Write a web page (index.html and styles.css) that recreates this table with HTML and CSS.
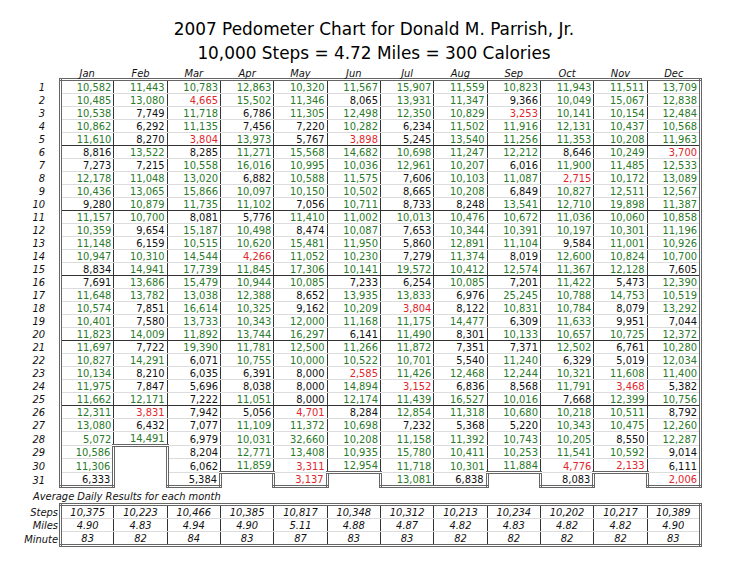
FILE: index.html
```html
<!DOCTYPE html>
<html>
<head>
<meta charset="utf-8">
<title>2007 Pedometer Chart</title>
<link rel="stylesheet" href="styles.css">
</head>
<body>
<div class="title">
<p>2007 Pedometer Chart for Donald M. Parrish, Jr.</p>
<p>10,000 Steps = 4.72 Miles = 300 Calories</p>
</div>
<table class="chart">
<colgroup><col class="lab"><col class="mon"><col class="mon"><col class="mon"><col class="mon"><col class="mon"><col class="mon"><col class="mon"><col class="mon"><col class="mon"><col class="mon"><col class="mon"><col class="mon"></colgroup>
<thead>
<tr><th></th><th class="m">Jan</th><th class="m">Feb</th><th class="m">Mar</th><th class="m">Apr</th><th class="m">May</th><th class="m">Jun</th><th class="m">Jul</th><th class="m">Aug</th><th class="m">Sep</th><th class="m">Oct</th><th class="m">Nov</th><th class="m">Dec</th></tr>
</thead>
<tbody>
<tr><th>1</th><td class="g">10,582</td><td class="g">11,443</td><td class="g">10,783</td><td class="g">12,863</td><td class="g">10,320</td><td class="g">11,567</td><td class="g">15,907</td><td class="g">11,559</td><td class="g">10,823</td><td class="g">11,943</td><td class="g">11,511</td><td class="g">13,709</td></tr>
<tr><th>2</th><td class="g">10,485</td><td class="g">13,080</td><td class="r">4,665</td><td class="g">15,502</td><td class="g">11,346</td><td>8,065</td><td class="g">13,931</td><td class="g">11,347</td><td>9,366</td><td class="g">10,049</td><td class="g">15,067</td><td class="g">12,838</td></tr>
<tr><th>3</th><td class="g">10,538</td><td>7,749</td><td class="g">11,718</td><td>6,786</td><td class="g">11,305</td><td class="g">12,498</td><td class="g">12,350</td><td class="g">10,829</td><td class="r">3,253</td><td class="g">10,141</td><td class="g">10,154</td><td class="g">12,484</td></tr>
<tr><th>4</th><td class="g">10,862</td><td>6,292</td><td class="g">11,135</td><td>7,456</td><td>7,220</td><td class="g">10,282</td><td>6,234</td><td class="g">11,502</td><td class="g">11,916</td><td class="g">12,131</td><td class="g">10,437</td><td class="g">10,568</td></tr>
<tr class="sep"><th>5</th><td class="g">11,610</td><td>8,270</td><td class="r">3,804</td><td class="g">13,973</td><td>5,767</td><td class="r">3,898</td><td>5,245</td><td class="g">13,540</td><td class="g">11,256</td><td class="g">11,353</td><td class="g">10,208</td><td class="g">11,963</td></tr>
<tr><th>6</th><td>8,816</td><td class="g">13,522</td><td>8,285</td><td class="g">11,271</td><td class="g">15,568</td><td class="g">14,682</td><td class="g">10,698</td><td class="g">11,247</td><td class="g">12,212</td><td>8,646</td><td class="g">10,249</td><td class="r">3,700</td></tr>
<tr><th>7</th><td>7,273</td><td>7,215</td><td class="g">10,558</td><td class="g">16,016</td><td class="g">10,995</td><td class="g">10,036</td><td class="g">12,961</td><td class="g">10,207</td><td>6,016</td><td class="g">11,900</td><td class="g">11,485</td><td class="g">12,533</td></tr>
<tr><th>8</th><td class="g">12,178</td><td class="g">11,048</td><td class="g">13,020</td><td>6,882</td><td class="g">10,588</td><td class="g">11,575</td><td>7,606</td><td class="g">10,103</td><td class="g">11,087</td><td class="r">2,715</td><td class="g">10,172</td><td class="g">13,089</td></tr>
<tr><th>9</th><td class="g">10,436</td><td class="g">13,065</td><td class="g">15,866</td><td class="g">10,097</td><td class="g">10,150</td><td class="g">10,502</td><td>8,665</td><td class="g">10,208</td><td>6,849</td><td class="g">10,827</td><td class="g">12,511</td><td class="g">12,567</td></tr>
<tr class="sep"><th>10</th><td>9,280</td><td class="g">10,879</td><td class="g">11,735</td><td class="g">11,102</td><td>7,056</td><td class="g">10,711</td><td>8,733</td><td>8,248</td><td class="g">13,541</td><td class="g">12,710</td><td class="g">19,898</td><td class="g">11,387</td></tr>
<tr><th>11</th><td class="g">11,157</td><td class="g">10,700</td><td>8,081</td><td>5,776</td><td class="g">11,410</td><td class="g">11,002</td><td class="g">10,013</td><td class="g">10,476</td><td class="g">10,672</td><td class="g">11,036</td><td class="g">10,060</td><td class="g">10,858</td></tr>
<tr><th>12</th><td class="g">10,359</td><td>9,654</td><td class="g">15,187</td><td class="g">10,498</td><td>8,474</td><td class="g">10,087</td><td>7,653</td><td class="g">10,344</td><td class="g">10,391</td><td class="g">10,197</td><td class="g">10,301</td><td class="g">11,196</td></tr>
<tr><th>13</th><td class="g">11,148</td><td>6,159</td><td class="g">10,515</td><td class="g">10,620</td><td class="g">15,481</td><td class="g">11,950</td><td>5,860</td><td class="g">12,891</td><td class="g">11,104</td><td>9,584</td><td class="g">11,001</td><td class="g">10,926</td></tr>
<tr><th>14</th><td class="g">10,947</td><td class="g">10,310</td><td class="g">14,544</td><td class="r">4,266</td><td class="g">11,052</td><td class="g">10,230</td><td>7,279</td><td class="g">11,374</td><td>8,019</td><td class="g">12,600</td><td class="g">10,824</td><td class="g">10,700</td></tr>
<tr class="sep"><th>15</th><td>8,834</td><td class="g">14,941</td><td class="g">17,739</td><td class="g">11,845</td><td class="g">17,306</td><td class="g">10,141</td><td class="g">19,572</td><td class="g">10,412</td><td class="g">12,574</td><td class="g">11,367</td><td class="g">12,128</td><td>7,605</td></tr>
<tr><th>16</th><td>7,691</td><td class="g">13,686</td><td class="g">15,479</td><td class="g">10,944</td><td class="g">10,085</td><td>7,233</td><td>6,254</td><td class="g">10,085</td><td>7,201</td><td class="g">11,422</td><td>5,473</td><td class="g">12,390</td></tr>
<tr><th>17</th><td class="g">11,648</td><td class="g">13,782</td><td class="g">13,038</td><td class="g">12,388</td><td>8,652</td><td class="g">13,935</td><td class="g">13,833</td><td>6,976</td><td class="g">25,245</td><td class="g">10,788</td><td class="g">14,753</td><td class="g">10,519</td></tr>
<tr><th>18</th><td class="g">10,574</td><td>7,851</td><td class="g">16,614</td><td class="g">10,325</td><td>9,162</td><td class="g">10,209</td><td class="r">3,804</td><td>8,122</td><td class="g">10,831</td><td class="g">10,784</td><td>8,079</td><td class="g">13,292</td></tr>
<tr><th>19</th><td class="g">10,401</td><td>7,580</td><td class="g">13,733</td><td class="g">10,343</td><td class="g">12,000</td><td class="g">11,168</td><td class="g">11,175</td><td class="g">14,477</td><td>6,309</td><td class="g">11,633</td><td>9,951</td><td>7,044</td></tr>
<tr class="sep"><th>20</th><td class="g">11,823</td><td class="g">14,009</td><td class="g">11,892</td><td class="g">13,744</td><td class="g">16,297</td><td>6,141</td><td class="g">11,490</td><td>8,301</td><td class="g">10,133</td><td class="g">10,657</td><td class="g">10,725</td><td class="g">12,372</td></tr>
<tr><th>21</th><td class="g">11,697</td><td>7,722</td><td class="g">19,390</td><td class="g">11,781</td><td class="g">12,500</td><td class="g">11,266</td><td class="g">11,872</td><td>7,351</td><td>7,371</td><td class="g">12,502</td><td>6,761</td><td class="g">10,280</td></tr>
<tr><th>22</th><td class="g">10,827</td><td class="g">14,291</td><td>6,071</td><td class="g">10,755</td><td class="g">10,000</td><td class="g">10,522</td><td class="g">10,701</td><td>5,540</td><td class="g">11,240</td><td>6,329</td><td>5,019</td><td class="g">12,034</td></tr>
<tr><th>23</th><td class="g">10,134</td><td>8,210</td><td>6,035</td><td>6,391</td><td>8,000</td><td class="r">2,585</td><td class="g">11,426</td><td class="g">12,468</td><td class="g">12,244</td><td class="g">10,321</td><td class="g">11,608</td><td class="g">11,400</td></tr>
<tr><th>24</th><td class="g">11,975</td><td>7,847</td><td>5,696</td><td>8,038</td><td>8,000</td><td class="g">14,894</td><td class="r">3,152</td><td>6,836</td><td>8,568</td><td class="g">11,791</td><td class="r">3,468</td><td>5,382</td></tr>
<tr class="sep"><th>25</th><td class="g">11,662</td><td class="g">12,171</td><td>7,222</td><td class="g">11,051</td><td>8,000</td><td class="g">12,174</td><td class="g">11,439</td><td class="g">16,527</td><td class="g">10,016</td><td>7,668</td><td class="g">12,399</td><td class="g">10,756</td></tr>
<tr><th>26</th><td class="g">12,311</td><td class="r">3,831</td><td>7,942</td><td>5,056</td><td class="r">4,701</td><td>8,284</td><td class="g">12,854</td><td class="g">11,318</td><td class="g">10,680</td><td class="g">10,218</td><td class="g">10,511</td><td>8,792</td></tr>
<tr><th>27</th><td class="g">13,080</td><td>6,432</td><td>7,077</td><td class="g">11,109</td><td class="g">11,372</td><td class="g">10,698</td><td>7,232</td><td>5,368</td><td>5,220</td><td class="g">10,343</td><td class="g">10,475</td><td class="g">12,260</td></tr>
<tr><th>28</th><td class="g">5,072</td><td class="g end">14,491</td><td>6,979</td><td class="g">10,031</td><td class="g">32,660</td><td class="g">10,208</td><td class="g">11,158</td><td class="g">11,392</td><td class="g">10,743</td><td class="g">10,205</td><td>8,550</td><td class="g">12,287</td></tr>
<tr><th>29</th><td class="g br">10,586</td><td class="x"></td><td class="bl">8,204</td><td class="g">12,771</td><td class="g">13,408</td><td class="g">10,935</td><td class="g">15,780</td><td class="g">10,411</td><td class="g">10,253</td><td class="g">11,541</td><td class="g">10,592</td><td>9,014</td></tr>
<tr><th>30</th><td class="g br">11,306</td><td class="x"></td><td class="bl">6,062</td><td class="g end">11,859</td><td class="r">3,311</td><td class="g end">12,954</td><td class="g">11,718</td><td class="g">10,301</td><td class="g end">11,884</td><td class="r">4,776</td><td class="r end">2,133</td><td>6,111</td></tr>
<tr class="last"><th>31</th><td class="br">6,333</td><td class="x"></td><td class="bl br">5,384</td><td class="x"></td><td class="r bl br">3,137</td><td class="x"></td><td class="g bl">13,081</td><td class="br">6,838</td><td class="x"></td><td class="bl br">8,083</td><td class="x"></td><td class="r bl">2,006</td></tr>
</tbody>
</table>
<div class="cap">Average Daily Results for each month</div>
<table class="avg">
<colgroup><col class="lab"><col class="mon"><col class="mon"><col class="mon"><col class="mon"><col class="mon"><col class="mon"><col class="mon"><col class="mon"><col class="mon"><col class="mon"><col class="mon"><col class="mon"></colgroup>
<tbody>
<tr><th>Steps</th><td>10,375</td><td>10,223</td><td>10,466</td><td>10,385</td><td>10,817</td><td>10,348</td><td>10,312</td><td>10,213</td><td>10,234</td><td>10,202</td><td>10,217</td><td>10,389</td></tr>
<tr><th>Miles</th><td>4.90</td><td>4.83</td><td>4.94</td><td>4.90</td><td>5.11</td><td>4.88</td><td>4.87</td><td>4.82</td><td>4.83</td><td>4.82</td><td>4.82</td><td>4.90</td></tr>
<tr><th>Minute</th><td>83</td><td>82</td><td>84</td><td>83</td><td>87</td><td>83</td><td>83</td><td>82</td><td>82</td><td>82</td><td>82</td><td>83</td></tr>
</tbody>
</table>
</body>
</html>
```

FILE: styles.css
```css
html, body {
  margin: 0;
  padding: 0;
  background: #ffffff;
}

body {
  width: 740px;
  height: 572px;
  overflow: hidden;
  font-family: "DejaVu Sans Condensed", "DejaVu Sans", sans-serif;
  font-stretch: condensed;
  font-size: 11px;
  color: #111111;
}

.title {
  padding-top: 17px;
  padding-left: 8px;
  text-align: center;
  font-family: "DejaVu Sans", sans-serif;
  font-stretch: normal;
  font-size: 16.9px;
  line-height: 24px;
  color: #000000;
}

.title p {
  margin: 0;
}

.chart,
.avg {
  border-collapse: collapse;
  table-layout: fixed;
  width: 702px;
  border: none;
}

.lab {
  width: 60.5px;
}

.mon {
  width: 53.33px;
}

.chart th,
.chart td,
.avg th,
.avg td {
  padding: 0;
  font-size: 11px;
  font-weight: normal;
  white-space: nowrap;
}

.chart thead th {
  height: 13px;
  line-height: 8px;
  vertical-align: bottom;
  font-style: italic;
  text-align: center;
  border: none;
}

.chart tbody th {
  text-align: right;
  font-style: italic;
  padding: 1px 14px 0 0;
  line-height: 11px;
  border: none;
}

.chart td {
  text-align: right;
  padding: 1px 2px 0 0;
  line-height: 11px;
  border-left: 1px solid #333333;
  border-right: 1px solid #333333;
  border-bottom: 1px solid #dcdcdc;
}

.chart tbody tr:first-child td {
  border-top: 3px double #666666;
}

.chart td:nth-child(2) {
  border-left: 3px double #666666;
}

.chart td:nth-child(13) {
  border-right: 3px double #666666;
}

.chart tr.sep td {
  border-bottom-color: #333333;
}

.chart tr.last td,
.chart td.end {
  border-bottom: 3px double #666666;
}

.chart td.bl {
  border-left: 3px double #666666;
}

.chart td.br {
  border-right: 3px double #666666;
}

.chart tr td.x {
  border: none;
}

.g {
  color: #2b7a2b;
}

.r {
  color: #e0262c;
}

.cap {
  padding-top: 3px;
  padding-left: 33px;
  font-style: italic;
  font-size: 11px;
  line-height: 12px;
}

.avg th {
  text-align: right;
  font-style: italic;
  padding: 1px 1px 0 0;
  line-height: 11px;
  border: none;
  overflow: hidden;
}

.avg td {
  text-align: center;
  font-style: italic;
  padding: 1px 0 0 0;
  line-height: 11px;
  border-left: 1px solid #333333;
  border-right: 1px solid #333333;
  border-bottom: 1px solid #dcdcdc;
}

.avg tr:first-child td {
  border-top: 3px double #666666;
}

.avg tr:last-child td {
  border-bottom: 3px double #666666;
}

.avg td:nth-child(2) {
  border-left: 3px double #666666;
}

.avg td:nth-child(13) {
  border-right: 3px double #666666;
}
```
